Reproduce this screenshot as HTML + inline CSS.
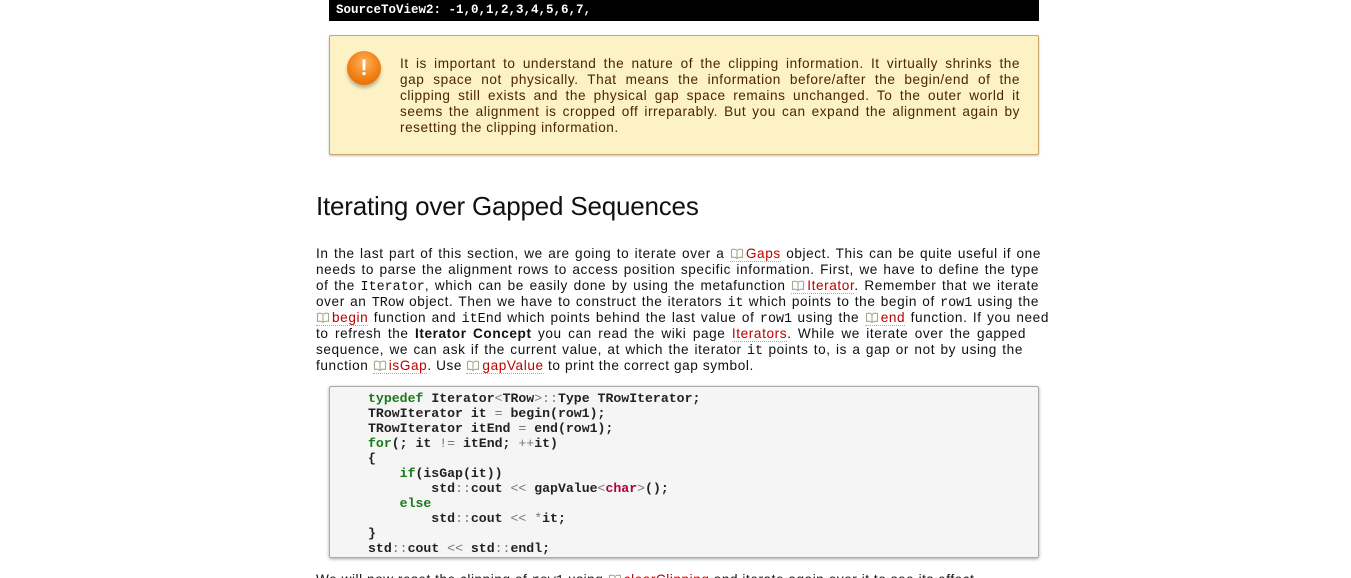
<!DOCTYPE html>
<html><head><meta charset="utf-8"><style>
html,body{margin:0;padding:0;background:#fff;width:1351px;height:578px;overflow:hidden;position:relative;font-family:"Liberation Sans",sans-serif;}
.blk{position:absolute;left:329px;top:-2px;width:710px;height:23px;background:#000;color:#fff;font:bold 12.5px/16px "Liberation Mono",monospace;}
.blk span{position:absolute;left:7px;top:4px;}
.note{position:absolute;left:329px;top:35px;width:708px;height:118px;background:#fdf1c6;border:1px solid #c9a86b;border-radius:2px;box-shadow:0 1px 2px rgba(0,0,0,.25);}
.ico{position:absolute;left:17px;top:15px;width:34px;height:34px;border-radius:50%;background:radial-gradient(circle at 50% 35%,#ffb35a,#f07c10 60%,#d96500);box-shadow:0 3px 3px rgba(0,0,0,.25);color:#fff;font:bold 22px/34px "Liberation Sans",sans-serif;text-align:center;}
.ntxt{position:absolute;left:70px;top:20px;width:620px;color:#4a2600;font-size:13.6px;letter-spacing:0.55px;line-height:16px;}
.l{display:block;height:16px;white-space:nowrap;text-align:justify;text-align-last:justify;}
.last{text-align-last:left;}
h2{position:absolute;left:316px;top:191px;margin:0;font-weight:normal;font-size:26px;color:#111;letter-spacing:-0.2px;}
.p{position:absolute;left:316px;top:246px;color:#111;font-size:13.6px;letter-spacing:0.6px;line-height:16px;}
.p .l{width:725px;}
code{font-family:"Liberation Mono",monospace;font-size:13.4px;letter-spacing:0;line-height:0;}
a{color:#b00;text-decoration:none;border-bottom:1px dotted #aaa;}
.bk{display:inline-block;width:14px;height:11px;margin-right:2px;vertical-align:-1px;}
.code{position:absolute;left:329px;top:386px;width:708px;height:170px;background:#f5f5f5;border:1px solid #aaa;border-radius:2px;box-shadow:0 1px 3px rgba(0,0,0,.35);}
.code pre{margin:0;position:absolute;left:38px;top:4px;font:bold 13.2px/15px "Liberation Mono",monospace;color:#222;}
.k{color:#1a7a1a;}.t{color:#b0003a;}.o{color:#777;font-weight:normal;}
.bot{position:absolute;left:316px;top:572px;font-size:13.6px;letter-spacing:0.55px;color:#111;white-space:nowrap;}
</style></head><body>
<svg width="0" height="0" style="position:absolute"><symbol id="b" viewBox="0 0 14 11"><path d="M7 2.5C5.5 1 3.5 1 1.5 1.5V9.5C3.5 9 5.5 9 7 10.5C8.5 9 10.5 9 12.5 9.5V1.5C10.5 1 8.5 1 7 2.5ZM7 2.5V10.5" fill="none" stroke="#a8a890" stroke-width="1.1"/></symbol></svg>
<div class="blk"><span>SourceToView2: -1,0,1,2,3,4,5,6,7,</span></div>
<div class="note"><div class="ico">!</div>
<div class="ntxt">
<span class="l">It is important to understand the nature of the clipping information. It virtually shrinks the</span>
<span class="l">gap space not physically. That means the information before/after the begin/end of the</span>
<span class="l">clipping still exists and the physical gap space remains unchanged. To the outer world it</span>
<span class="l">seems the alignment is cropped off irreparably. But you can expand the alignment again by</span>
<span class="l last">resetting the clipping information.</span>
</div></div>
<h2>Iterating over Gapped Sequences</h2>
<div class="p">
<span class="l">In the last part of this section, we are going to iterate over a <a><svg class="bk"><use href="#b"/></svg>Gaps</a> object. This can be quite useful if one</span>
<span class="l" style="width:723px">needs to parse the alignment rows to access position specific information. First, we have to define the type</span>
<span class="l" style="width:723px">of the <code>Iterator</code>, which can be easily done by using the metafunction <a><svg class="bk"><use href="#b"/></svg>Iterator</a>. Remember that we iterate</span>
<span class="l" style="width:723px">over an <code>TRow</code> object. Then we have to construct the iterators <code>it</code> which points to the begin of <code>row1</code> using the</span>
<span class="l" style="width:733px"><a><svg class="bk"><use href="#b"/></svg>begin</a> function and <code>itEnd</code> which points behind the last value of <code>row1</code> using the <a><svg class="bk"><use href="#b"/></svg>end</a> function. If you need</span>
<span class="l" style="width:710px">to refresh the <b>Iterator Concept</b> you can read the wiki page <a>Iterators</a>. While we iterate over the gapped</span>
<span class="l" style="width:707px">sequence, we can ask if the current value, at which the iterator <code>it</code> points to, is a gap or not by using the</span>
<span class="l last">function <a><svg class="bk"><use href="#b"/></svg>isGap</a>. Use <a><svg class="bk"><use href="#b"/></svg>gapValue</a> to print the correct gap symbol.</span>
</div>
<div class="code"><pre><span class="k">typedef</span> Iterator<span class="o">&lt;</span>TRow<span class="o">&gt;::</span>Type TRowIterator;
TRowIterator it <span class="o">=</span> begin(row1);
TRowIterator itEnd <span class="o">=</span> end(row1);
<span class="k">for</span>(; it <span class="o">!=</span> itEnd; <span class="o">++</span>it)
{
    <span class="k">if</span>(isGap(it))
        std<span class="o">::</span>cout <span class="o">&lt;&lt;</span> gapValue<span class="o">&lt;</span><span class="t">char</span><span class="o">&gt;</span>();
    <span class="k">else</span>
        std<span class="o">::</span>cout <span class="o">&lt;&lt;</span> <span class="o">*</span>it;
}
std<span class="o">::</span>cout <span class="o">&lt;&lt;</span> std<span class="o">::</span>endl;</pre></div>
<div class="bot">We will now reset the clipping of <code>row1</code> using <a><svg class="bk"><use href="#b"/></svg>clearClipping</a> and iterate again over it to see its effect.</div>
</body></html>
